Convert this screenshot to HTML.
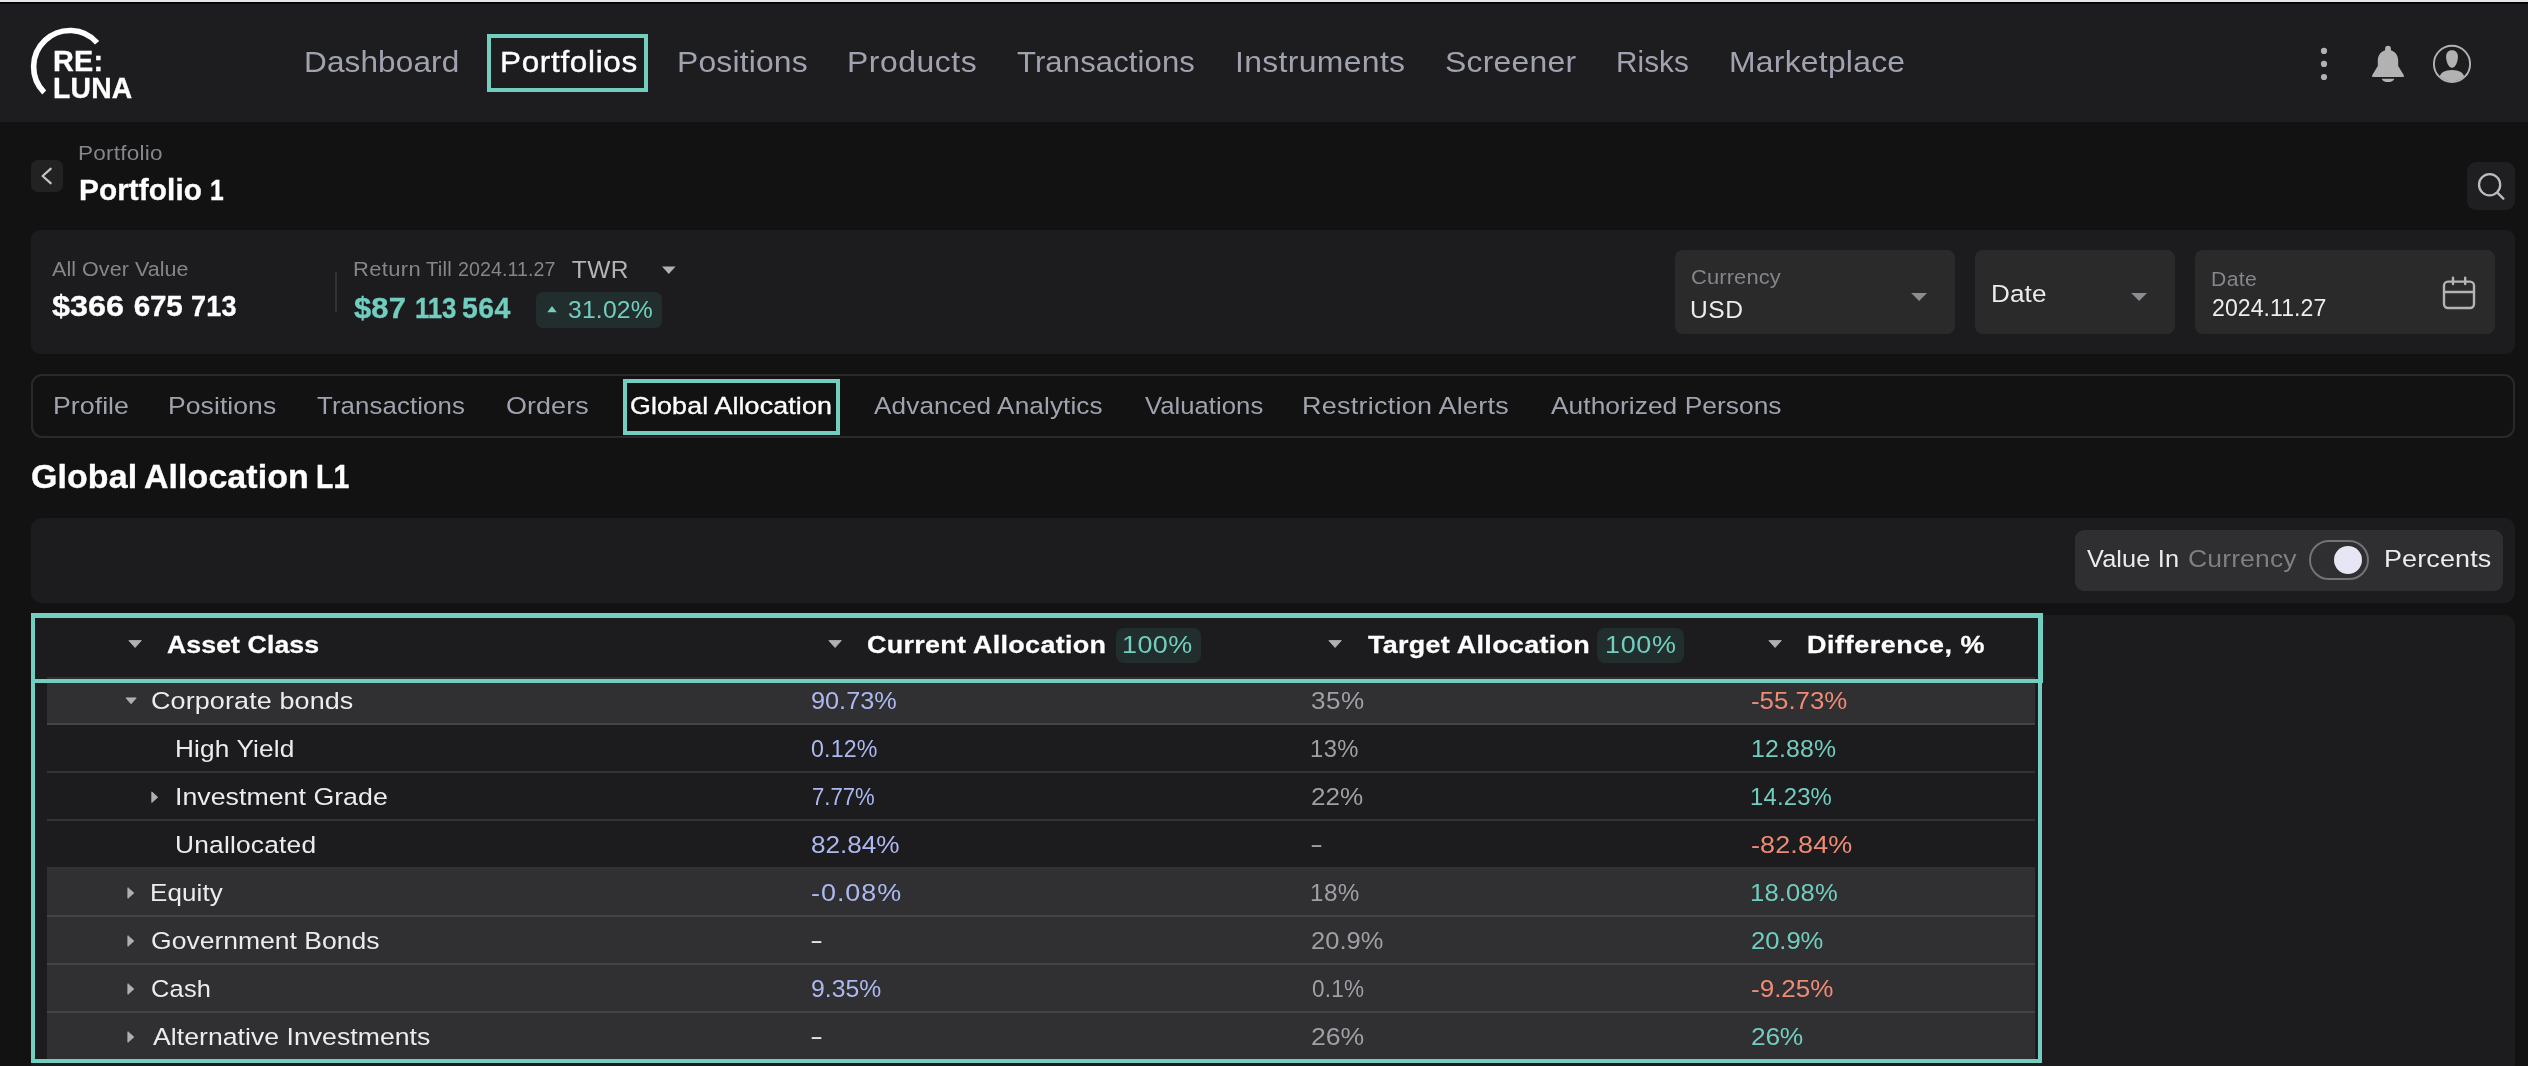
<!DOCTYPE html>
<html lang="en"><head><meta charset="utf-8"><title>RE:LUNA – Portfolio 1 – Global Allocation</title>
<style>
html,body{margin:0;padding:0}
body{width:2528px;height:1066px;overflow:hidden;background:#121212;position:relative;font-family:"Liberation Sans",sans-serif}
.a{position:absolute;box-sizing:border-box}
.t{position:absolute;white-space:pre;line-height:0;height:0;display:block;transform-origin:0 0}
#strip{left:0;top:0;width:2528px;height:2px;background:#e8e7e5}
#strip2{left:0;top:2px;width:2528px;height:2px;background:#000;border-bottom:0}
#hdr{left:0;top:3px;width:2528px;height:119px;background:#1d1d1f;border-top:1px solid #0b0b0c}
.teal{border:4px solid #72cfc0}
.card{background:#1c1c1f;border-radius:9px}

.box{background:#2a2a2b;border-radius:8px}
.row{left:47px;width:1988px;height:48px}
.row.l{background:#303033;border-bottom:2px solid #444447}
.row.d{background:#1c1c1f;border-bottom:2px solid #333336}
.badge{background:#222e2d;border-radius:8px}
svg{position:absolute;overflow:visible}
#texts{position:absolute;left:0;top:0;width:2528px;height:1066px;will-change:opacity;opacity:.999}

</style></head>
<body>
<div class="a" id="strip"></div><div class="a" id="strip2" style="height:1px"></div>
<div class="a" id="hdr"></div>
<!-- logo arc -->
<svg style="left:0;top:0" width="160" height="122" viewBox="0 0 160 122"><path d="M44.23 92.47 A36.3 36.3 0 1 1 97.09 42.75" fill="none" stroke="#fff" stroke-width="5.6"/></svg>
<!-- active nav -->
<div class="a teal" style="left:487px;top:34px;width:161px;height:58px"></div>
<!-- header icons -->
<svg style="left:2300px;top:30px" width="200" height="70" viewBox="2300 30 200 70">
 <g fill="#b2b2b2"><circle cx="2324" cy="50.9" r="3.1"/><circle cx="2324" cy="63.9" r="3.1"/><circle cx="2324" cy="77" r="3.1"/>
 <path d="M2385.1 50.2v-1.6a2.9 2.9 0 0 1 5.8 0v1.6c4.5 1.4 7.3 5.2 7.3 10.3v5.6l5.5 8.8c.6 1 .1 2.2 -1 2.2h-29.4c-1.1 0 -1.6 -1.2 -1 -2.2l5.5 -8.8v-5.6c0 -5.100000000000001 2.8 -8.9 7.3 -10.3z"/>
 <path d="M2381.7 78.7h12.6c-.7 2.1 -3.2 3.4 -6.3 3.4s-5.6 -1.3 -6.3 -3.4z"/></g>
 <clipPath id="uc"><circle cx="2452" cy="63.9" r="17.4"/></clipPath>
 <circle cx="2452" cy="63.9" r="18.1" fill="none" stroke="#b2b2b2" stroke-width="1.9"/>
 <g fill="#b2b2b2" clip-path="url(#uc)"><path d="M2452 50.2c3.7 0 5.9 2.5 5.9 6.4c0 5.3 -2.3 11.2 -5.9 11.2s-5.9 -5.9 -5.9 -11.2c0 -3.9 2.2 -6.4 5.9 -6.4z"/><path d="M2439.6 78.2c0 -5.2 5.200000000000001 -8.1 12.4 -8.1s12.4 2.9 12.4 8.1v12h-24.8z"/></g>
</svg>
<!-- back btn -->
<div class="a" style="left:31px;top:160px;width:32px;height:32px;border-radius:7px;background:#222223"></div>
<svg style="left:31px;top:160px" width="32" height="32" viewBox="31 160 32 32"><path d="M50.6 168.8L42.6 176L50.6 183.2" fill="none" stroke="#c4c4c4" stroke-width="2.3" stroke-linecap="round" stroke-linejoin="round"/></svg>
<!-- search btn -->
<div class="a" style="left:2467px;top:162px;width:48px;height:48px;border-radius:9px;background:#1f1f21"></div>
<svg style="left:2467px;top:162px" width="48" height="48" viewBox="2467 162 48 48"><circle cx="2489.6" cy="184.7" r="10.6" fill="none" stroke="#bcbcbc" stroke-width="2.3"/><path d="M2497.3 192.7L2503.4 198.6" stroke="#bcbcbc" stroke-width="2.3" stroke-linecap="round"/></svg>
<!-- summary card -->
<div class="a card" style="left:31px;top:230px;width:2484px;height:124px"></div>
<div class="a" style="left:335px;top:272px;width:2px;height:40px;background:#333336"></div>
<svg style="left:655px;top:260px" width="30" height="20" viewBox="655 260 30 20"><path d="M662 266.4h13.6l-6.8 7.6z" fill="#b0b0b4"/></svg>
<div class="a badge" style="left:536px;top:292px;width:126px;height:36px;border-radius:7px"></div>
<svg style="left:540px;top:300px" width="20" height="20" viewBox="540 300 20 20"><path d="M547.3 312.2h9.4l-4.7 -6.1z" fill="#72cfc0"/></svg>
<div class="a box" style="left:1675px;top:250px;width:280px;height:84px"></div>
<div class="a box" style="left:1975px;top:250px;width:200px;height:84px"></div>
<div class="a box" style="left:2195px;top:250px;width:300px;height:84px"></div>
<svg style="left:1900px;top:285px" width="260" height="24" viewBox="1900 285 260 24"><path d="M1911.2 293h15.8l-7.9 7.9z" fill="#8c8c92"/><path d="M2131.2 293h15.8l-7.9 7.9z" fill="#8c8c92"/></svg>
<svg style="left:2436px;top:270px" width="46" height="46" viewBox="2436 270 46 46"><g fill="none" stroke="#b4b4b4" stroke-width="2.4" stroke-linecap="round"><rect x="2444" y="281.6" width="30" height="26.4" rx="4"/><path d="M2444 292h30M2453 277.6v6.4M2465.2 277.6v6.4"/></g></svg>
<!-- tabs -->
<div class="a" style="left:31px;top:374px;width:2484px;height:64px;border:2px solid #2a2a2c;border-radius:11px"></div>
<div class="a teal" style="left:623px;top:379px;width:217px;height:56px"></div>
<!-- toolbar -->
<div class="a card" style="left:31px;top:518px;width:2484px;height:85px;border-radius:11px"></div>
<div class="a" style="left:2075px;top:530px;width:428px;height:61px;border-radius:9px;background:#2f2f32"></div>
<div class="a" style="left:2309px;top:540px;width:60px;height:40px;border-radius:20px;border:2px solid #727277"></div>
<div class="a" style="left:2334px;top:546px;width:28px;height:28px;border-radius:14px;background:#e6e6f5"></div>
<!-- table panel -->
<div class="a card" style="left:31px;top:615px;width:2484px;height:460px;border-radius:11px"></div>
<div class="a row l" style="top:677px"></div>
<div class="a row d" style="top:725px"></div>
<div class="a row d" style="top:773px"></div>
<div class="a row d" style="top:821px;border-bottom-color:#323235"></div>
<div class="a row l" style="top:869px"></div>
<div class="a row l" style="top:917px"></div>
<div class="a row l" style="top:965px"></div>
<div class="a row l" style="top:1013px"></div>
<div class="a" style="left:35px;top:617px;width:2003px;height:60px;background:#1c1c1f"></div>
<div class="a teal" style="left:31px;top:614px;width:2011px;height:449px"></div>
<div class="a teal" style="left:31px;top:613px;width:2012px;height:70px"></div>
<div class="a badge" style="left:1116.25px;top:627.5px;width:84.5px;height:35px"></div>
<div class="a badge" style="left:1597px;top:627.5px;width:87px;height:35px"></div>
<!-- carets -->
<svg style="left:0;top:600px" width="2100" height="466" viewBox="0 600 2100 466"><g fill="#b0b0b2" stroke="#b0b0b2" stroke-width="0.9" stroke-linejoin="round">
<path d="M128.9 640.6h12.4l-6.2 6.9z"/><path d="M828.9 640.6h12.4l-6.2 6.9z"/><path d="M1328.9 640.6h12.4l-6.2 6.9z"/><path d="M1768.9 640.6h12.4l-6.2 6.9z"/>
<path d="M126 697.9h10.2l-5.1 5.9z"/>
<path d="M151.8 791.9v10.6l5.9 -5.3z"/>
<path d="M127.9 887.7v10.6l5.9 -5.3z"/><path d="M127.9 935.7v10.6l5.9 -5.3z"/><path d="M127.9 983.7v10.6l5.9 -5.3z"/><path d="M127.9 1031.7v10.6l5.9 -5.3z"/>
</g></svg>

<div id="texts">
<nav id="main-nav">
<span class="t" style="left:303.93px;top:61.95px;font-size:29px;color:#a1a4b0;letter-spacing:0.120px;transform:scaleX(1.0865)">Dashboard</span>
<span class="t" style="left:500.26px;top:62.09px;font-size:28.6px;color:#ffffff;letter-spacing:0.618px;transform:scaleX(1.1000);-webkit-text-stroke:0.4px #ffffff">Portfolios</span>
<span class="t" style="left:677.14px;top:61.95px;font-size:29px;color:#a1a4b0;letter-spacing:0.140px;transform:scaleX(1.1000)">Positions</span>
<span class="t" style="left:847.14px;top:61.95px;font-size:29px;color:#a1a4b0;letter-spacing:0.491px;transform:scaleX(1.1000)">Products</span>
<span class="t" style="left:1017.05px;top:61.95px;font-size:29px;color:#a1a4b0;letter-spacing:0.103px;transform:scaleX(1.0706)">Transactions</span>
<span class="t" style="left:1234.78px;top:61.95px;font-size:29px;color:#a1a4b0;letter-spacing:0.308px;transform:scaleX(1.1000)">Instruments</span>
<span class="t" style="left:1444.99px;top:61.95px;font-size:29px;color:#a1a4b0;letter-spacing:0.204px;transform:scaleX(1.1000)">Screener</span>
<span class="t" style="left:1616.45px;top:61.95px;font-size:29px;color:#a1a4b0;letter-spacing:0.039px;transform:scaleX(1.0243)">Risks</span>
<span class="t" style="left:1729.14px;top:61.95px;font-size:29px;color:#a1a4b0;letter-spacing:0.210px;transform:scaleX(1.1000)">Marketplace</span>
</nav>
<div id="logo">
<span class="t" style="left:52.86px;top:61.45px;font-size:29.3px;color:#ffffff;font-weight:700;letter-spacing:0.230px;transform:scaleX(0.9833);-webkit-text-stroke:0.32px #ffffff">RE:</span>
<span class="t" style="left:52.88px;top:88.35px;font-size:29.3px;color:#ffffff;font-weight:700;letter-spacing:0.255px;transform:scaleX(0.9652);-webkit-text-stroke:0.32px #ffffff">LUNA</span>
</div>
<div id="breadcrumb">
<span class="t" style="left:78.41px;top:152.90px;font-size:20.5px;color:#86868c;letter-spacing:0.196px;transform:scaleX(1.1000)">Portfolio</span>
<span class="t" style="left:78.69px;top:190.45px;font-size:29px;color:#ffffff;font-weight:700;letter-spacing:0.102px;transform:scaleX(1.0240);-webkit-text-stroke:0.32px #ffffff">Portfolio</span>
<span class="t" style="left:210.19px;top:190.45px;font-size:29px;color:#ffffff;font-weight:700;transform:scaleX(0.8500);-webkit-text-stroke:0.32px #ffffff">1</span>
</div>
<section id="summary">
<span class="t" style="left:52.04px;top:268.50px;font-size:20.5px;color:#86868c;letter-spacing:0.046px;transform:scaleX(1.0490)">All Over Value</span>
<span class="t" style="left:52.04px;top:306.24px;font-size:29.6px;color:#ffffff;font-weight:700;letter-spacing:0.029px;transform:scaleX(1.0941);-webkit-text-stroke:0.33px #ffffff">$366</span>
<span class="t" style="left:133.85px;top:306.24px;font-size:29.6px;color:#ffffff;font-weight:700;letter-spacing:-0.241px;-webkit-text-stroke:0.33px #ffffff">675</span>
<span class="t" style="left:191.09px;top:306.24px;font-size:29.6px;color:#ffffff;font-weight:700;letter-spacing:0.266px;transform:scaleX(0.9126);-webkit-text-stroke:0.33px #ffffff">713</span>
<span class="t" style="left:352.62px;top:268.50px;font-size:20.5px;color:#86868c;letter-spacing:0.307px;transform:scaleX(1.0732)">Return</span>
<span class="t" style="left:426.04px;top:268.50px;font-size:20.5px;color:#86868c;letter-spacing:0.160px;transform:scaleX(0.9903)">Till</span>
<span class="t" style="left:458.13px;top:268.50px;font-size:20.5px;color:#86868c;letter-spacing:0.072px;transform:scaleX(0.9584)">2024.11.27</span>
<span class="t" style="left:571.83px;top:269.61px;font-size:24.5px;color:#b4b4b8;letter-spacing:0.470px">TWR</span>
<span class="t" style="left:354.46px;top:308.11px;font-size:30px;color:#72cfc0;font-weight:700;letter-spacing:0.124px;transform:scaleX(1.0316);-webkit-text-stroke:0.33px #72cfc0">$87</span>
<span class="t" style="left:414.60px;top:308.11px;font-size:30px;color:#72cfc0;font-weight:700;letter-spacing:-0.212px;transform:scaleX(0.8600);-webkit-text-stroke:0.33px #72cfc0">113</span>
<span class="t" style="left:462.48px;top:308.11px;font-size:30px;color:#72cfc0;font-weight:700;letter-spacing:0.486px;transform:scaleX(0.9476);-webkit-text-stroke:0.33px #72cfc0">564</span>
<span class="t" style="left:567.82px;top:309.91px;font-size:24.5px;color:#72cfc0;letter-spacing:0.178px;transform:scaleX(1.0087)">31.02%</span>
<span class="t" style="left:1691.35px;top:277.30px;font-size:20.5px;color:#86868c;letter-spacing:0.109px;transform:scaleX(1.0690)">Currency</span>
<span class="t" style="left:1690.40px;top:309.91px;font-size:24.5px;color:#ededee;letter-spacing:0.534px;transform:scaleX(1.0039)">USD</span>
<span class="t" style="left:1990.87px;top:293.51px;font-size:24.5px;color:#ededee;letter-spacing:0.097px;transform:scaleX(1.0646)">Date</span>
<span class="t" style="left:2211.36px;top:278.90px;font-size:20.5px;color:#86868c;letter-spacing:0.365px;transform:scaleX(1.0322)">Date</span>
<span class="t" style="left:2212.02px;top:307.51px;font-size:24.5px;color:#ededee;letter-spacing:0.066px;transform:scaleX(0.9410)">2024.11.27</span>
</section>
<nav id="portfolio-tabs">
<span class="t" style="left:52.57px;top:405.71px;font-size:24.5px;color:#a1a4b0;letter-spacing:0.040px;transform:scaleX(1.0895)">Profile</span>
<span class="t" style="left:168.33px;top:405.71px;font-size:24.5px;color:#a1a4b0;letter-spacing:0.056px;transform:scaleX(1.0838)">Positions</span>
<span class="t" style="left:317.16px;top:405.71px;font-size:24.5px;color:#a1a4b0;letter-spacing:0.087px;transform:scaleX(1.0536)">Transactions</span>
<span class="t" style="left:506.40px;top:405.71px;font-size:24.5px;color:#a1a4b0;letter-spacing:0.085px;transform:scaleX(1.0974)">Orders</span>
<span class="t" style="left:629.91px;top:405.71px;font-size:24.5px;color:#ffffff;letter-spacing:0.127px;transform:scaleX(1.0937);-webkit-text-stroke:0.35px #ffffff">Global Allocation</span>
<span class="t" style="left:873.50px;top:405.71px;font-size:24.5px;color:#a1a4b0;letter-spacing:0.097px;transform:scaleX(1.0678)">Advanced Analytics</span>
<span class="t" style="left:1145.00px;top:405.71px;font-size:24.5px;color:#a1a4b0;letter-spacing:0.041px;transform:scaleX(1.0463)">Valuations</span>
<span class="t" style="left:1302.30px;top:405.71px;font-size:24.5px;color:#a1a4b0;letter-spacing:0.246px;transform:scaleX(1.1000)">Restriction Alerts</span>
<span class="t" style="left:1550.50px;top:405.71px;font-size:24.5px;color:#a1a4b0;letter-spacing:0.037px;transform:scaleX(1.0749)">Authorized Persons</span>
</nav>
<div id="page-title">
<span class="t" style="left:31.39px;top:476.57px;font-size:33px;color:#ffffff;font-weight:700;letter-spacing:0.104px;word-spacing:-1.5px;transform:scaleX(1.0279);-webkit-text-stroke:0.36px #ffffff">Global Allocation</span>
<span class="t" style="left:316.48px;top:476.57px;font-size:33px;color:#ffffff;font-weight:700;letter-spacing:0.015px;transform:scaleX(0.8643);-webkit-text-stroke:0.36px #ffffff">L1</span>
</div>
<div id="value-toggle">
<span class="t" style="left:2086.50px;top:559.01px;font-size:24.5px;color:#ededee;letter-spacing:0.142px;transform:scaleX(1.0325)">Value In</span>
<span class="t" style="left:2188.42px;top:559.01px;font-size:24.5px;color:#7f7f85;letter-spacing:0.130px;transform:scaleX(1.0823)">Currency</span>
<span class="t" style="left:2384.30px;top:559.01px;font-size:24.5px;color:#ededee;letter-spacing:0.116px;transform:scaleX(1.1000)">Percents</span>
</div>
<div id="table-head">
<span class="t" style="left:167.46px;top:644.51px;font-size:24.5px;color:#ffffff;font-weight:700;letter-spacing:0.075px;transform:scaleX(1.0887);-webkit-text-stroke:0.27px #ffffff">Asset Class</span>
<span class="t" style="left:867.49px;top:644.51px;font-size:24.5px;color:#ffffff;font-weight:700;letter-spacing:0.258px;transform:scaleX(1.1000);-webkit-text-stroke:0.27px #ffffff">Current Allocation</span>
<span class="t" style="left:1122.35px;top:644.51px;font-size:24.5px;color:#72cfc0;letter-spacing:0.388px;transform:scaleX(1.1000)">100%</span>
<span class="t" style="left:1368.00px;top:644.51px;font-size:24.5px;color:#ffffff;font-weight:700;letter-spacing:0.258px;transform:scaleX(1.1000);-webkit-text-stroke:0.27px #ffffff">Target Allocation</span>
<span class="t" style="left:1604.60px;top:644.51px;font-size:24.5px;color:#72cfc0;letter-spacing:0.620px;transform:scaleX(1.1000)">100%</span>
<span class="t" style="left:1806.86px;top:644.51px;font-size:24.5px;color:#ffffff;font-weight:700;letter-spacing:0.518px;transform:scaleX(1.1000);-webkit-text-stroke:0.27px #ffffff">Difference, %</span>
</div>
<div id="table-body">
<span class="t" style="left:151.15px;top:701.41px;font-size:24.5px;color:#ededee;letter-spacing:0.101px;transform:scaleX(1.1000)">Corporate bonds</span>
<span class="t" style="left:811.47px;top:701.41px;font-size:24.5px;color:#aeb9f2;letter-spacing:0.010px;transform:scaleX(1.0312)">90.73%</span>
<span class="t" style="left:1311.24px;top:701.41px;font-size:24.5px;color:#a0a0a6;letter-spacing:0.425px;transform:scaleX(1.0642)">35%</span>
<span class="t" style="left:1750.99px;top:701.41px;font-size:24.5px;color:#f08b76;letter-spacing:0.012px;transform:scaleX(1.0546)">-55.73%</span>
<span class="t" style="left:174.61px;top:749.41px;font-size:24.5px;color:#ededee;letter-spacing:0.114px;transform:scaleX(1.0708)">High Yield</span>
<span class="t" style="left:811.26px;top:749.41px;font-size:24.5px;color:#aeb9f2;letter-spacing:0.152px;transform:scaleX(0.9471)">0.12%</span>
<span class="t" style="left:1310.27px;top:749.41px;font-size:24.5px;color:#a0a0a6;letter-spacing:0.439px;transform:scaleX(0.9725)">13%</span>
<span class="t" style="left:1750.74px;top:749.41px;font-size:24.5px;color:#72cfc0;letter-spacing:0.161px;transform:scaleX(1.0128)">12.88%</span>
<span class="t" style="left:174.57px;top:797.41px;font-size:24.5px;color:#ededee;letter-spacing:0.020px;transform:scaleX(1.0908)">Investment Grade</span>
<span class="t" style="left:811.60px;top:797.41px;font-size:24.5px;color:#aeb9f2;letter-spacing:0.017px;transform:scaleX(0.9020)">7.77%</span>
<span class="t" style="left:1310.97px;top:797.41px;font-size:24.5px;color:#a0a0a6;letter-spacing:-0.071px;transform:scaleX(1.0656)">22%</span>
<span class="t" style="left:1750.23px;top:797.41px;font-size:24.5px;color:#72cfc0;letter-spacing:0.159px;transform:scaleX(0.9759)">14.23%</span>
<span class="t" style="left:174.88px;top:845.41px;font-size:24.5px;color:#ededee;letter-spacing:0.189px;transform:scaleX(1.0746)">Unallocated</span>
<span class="t" style="left:811.43px;top:845.41px;font-size:24.5px;color:#aeb9f2;letter-spacing:-0.051px;transform:scaleX(1.0669)">82.84%</span>
<span class="t" style="left:1310.25px;top:843.71px;font-size:24.5px;color:#a0a0a6;transform:scaleX(1.6000)">-</span>
<span class="t" style="left:1750.94px;top:845.41px;font-size:24.5px;color:#f08b76;letter-spacing:0.128px;transform:scaleX(1.1000)">-82.84%</span>
<span class="t" style="left:150.38px;top:893.41px;font-size:24.5px;color:#ededee;letter-spacing:0.132px;transform:scaleX(1.0592)">Equity</span>
<span class="t" style="left:811.40px;top:893.41px;font-size:24.5px;color:#aeb9f2;letter-spacing:0.874px;transform:scaleX(1.1000)">-0.08%</span>
<span class="t" style="left:1310.14px;top:893.41px;font-size:24.5px;color:#a0a0a6;letter-spacing:0.414px;transform:scaleX(0.9894)">18%</span>
<span class="t" style="left:1750.47px;top:893.41px;font-size:24.5px;color:#72cfc0;letter-spacing:0.166px;transform:scaleX(1.0448)">18.08%</span>
<span class="t" style="left:151.42px;top:941.41px;font-size:24.5px;color:#ededee;letter-spacing:0.010px;transform:scaleX(1.0820)">Government Bonds</span>
<span class="t" style="left:809.94px;top:939.71px;font-size:24.5px;color:#e4e4e6;transform:scaleX(1.6000)">-</span>
<span class="t" style="left:1311.00px;top:941.41px;font-size:24.5px;color:#a0a0a6;letter-spacing:0.035px;transform:scaleX(1.0394)">20.9%</span>
<span class="t" style="left:1750.99px;top:941.41px;font-size:24.5px;color:#72cfc0;letter-spacing:-0.071px;transform:scaleX(1.0453)">20.9%</span>
<span class="t" style="left:151.46px;top:989.41px;font-size:24.5px;color:#ededee;letter-spacing:0.239px;transform:scaleX(1.0357)">Cash</span>
<span class="t" style="left:811.49px;top:989.41px;font-size:24.5px;color:#aeb9f2;letter-spacing:0.027px;transform:scaleX(1.0098)">9.35%</span>
<span class="t" style="left:1311.73px;top:989.41px;font-size:24.5px;color:#a0a0a6;letter-spacing:0.286px;transform:scaleX(0.9199)">0.1%</span>
<span class="t" style="left:1750.98px;top:989.41px;font-size:24.5px;color:#f08b76;transform:scaleX(1.0621)">-9.25%</span>
<span class="t" style="left:152.50px;top:1037.41px;font-size:24.5px;color:#ededee;letter-spacing:0.032px;transform:scaleX(1.0859)">Alternative Investments</span>
<span class="t" style="left:809.94px;top:1035.71px;font-size:24.5px;color:#e4e4e6;transform:scaleX(1.6000)">-</span>
<span class="t" style="left:1310.95px;top:1037.41px;font-size:24.5px;color:#a0a0a6;letter-spacing:-0.033px;transform:scaleX(1.0867)">26%</span>
<span class="t" style="left:1750.96px;top:1037.41px;font-size:24.5px;color:#72cfc0;letter-spacing:-0.223px;transform:scaleX(1.0762)">26%</span>
</div>
</div>
<script>/* fit-to-viewport: no-op at the native 2528px width */(function(){var w=window.innerWidth;if(w&&Math.abs(w-2528)>2){document.documentElement.style.zoom=w/2528;}})();</script>
</body></html>
